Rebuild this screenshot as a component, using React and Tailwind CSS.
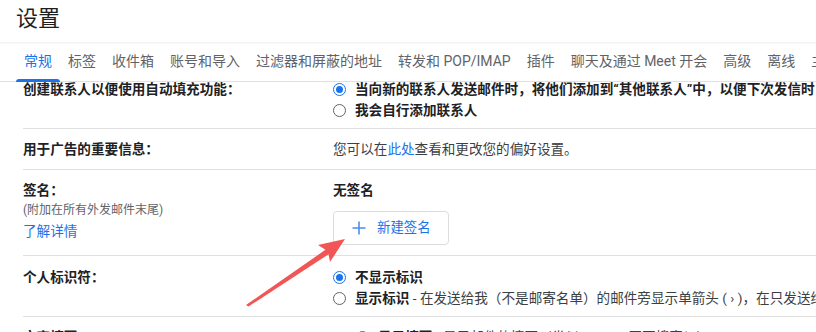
import React from "react"

const tabs = [
  "常规",
  "标签",
  "收件箱",
  "账号和导入",
  "过滤器和屏蔽的地址",
  "转发和 POP/IMAP",
  "插件",
  "聊天及通过 Meet 开会",
  "高级",
  "离线",
  "主题",
]

function Radio({ checked }) {
  return (
    <span
      className={
        checked
          ? "flex h-[13px] w-[13px] shrink-0 items-center justify-center rounded-full border-[1.5px] border-[#1a73e8]"
          : "flex h-[13px] w-[13px] shrink-0 items-center justify-center rounded-full border-[1.5px] border-[#5f6368]"
      }
    >
      {checked && <span className="h-[7px] w-[7px] rounded-full bg-[#1a73e8]" />}
    </span>
  )
}

function RadioLine({ checked, children }) {
  return (
    <div className="flex items-center gap-[9px] leading-[21px]">
      <Radio checked={checked} />
      <span>{children}</span>
    </div>
  )
}

export default function App() {
  return (
    <div
      className="relative h-[332px] w-[816px] overflow-hidden bg-white text-[#202124]"
      style={{ fontFamily: 'Roboto, "Noto Sans CJK SC", sans-serif' }}
    >
      {/* header */}
      <div className="relative z-10 h-[42px] pl-[16px] pt-[5px] text-[22px] leading-[28px] text-[#1f1f1f] shadow-[0_1px_2px_rgba(0,0,0,0.08)]">
        设置
      </div>

      {/* tabs */}
      <div className="flex h-[40px] whitespace-nowrap border-b border-[#e0e0e0] pl-[16px] text-[14px]">
        {tabs.map((t, i) => (
          <div
            key={t}
            className={
              i === 0
                ? "relative flex h-full shrink-0 items-center px-2 text-[#1a73e8]"
                : "relative flex h-full shrink-0 items-center px-2 text-[#5f6368]"
            }
          >
            {t}
            {i === 0 && (
              <span className="absolute bottom-[-1px] left-0 right-0 h-[3px] rounded-t-[3px] bg-[#1a73e8]" />
            )}
          </div>
        ))}
      </div>

      {/* settings rows */}
      <div className="overflow-hidden whitespace-nowrap pl-[23px] text-[13.6px]">
        <div className="-mt-[3px] flex border-b border-[#e0e0e0] pb-[7px]">
          <div className="w-[310px] shrink-0 font-bold leading-[20px]">创建联系人以便使用自动填充功能：</div>
          <div className="font-bold">
            <RadioLine checked>当向新的联系人发送邮件时，将他们添加到“其他联系人”中，以便下次发信时自动填充</RadioLine>
            <RadioLine>我会自行添加联系人</RadioLine>
          </div>
        </div>

        <div className="flex border-b border-[#e0e0e0] py-[10px] leading-[20px]">
          <div className="w-[310px] shrink-0 font-bold">用于广告的重要信息：</div>
          <div className="text-[#3c4043]">
            您可以在<span className="text-[#1a73e8]">此处</span>查看和更改您的偏好设置。
          </div>
        </div>

        <div className="flex border-b border-[#e0e0e0] pb-[10px] pt-[10px]">
          <div className="w-[310px] shrink-0 leading-[20px]">
            <div className="font-bold">签名：</div>
            <div className="text-[12px] leading-[21px] text-[#5f6368]">(附加在所有外发邮件末尾)</div>
            <div className="text-[#1a73e8]">了解详情</div>
          </div>
          <div>
            <div className="font-bold leading-[20px]">无签名</div>
            <button className="mt-[11px] flex h-[34px] items-center gap-[11px] rounded-[4px] border border-[#dadce0] bg-white pl-[18px] pr-[17px] text-[13.4px] text-[#1a73e8]">
              <svg width="14" height="14" viewBox="0 0 14 14" fill="none" stroke="#4c8df0" strokeWidth="1.6">
                <path d="M7 0.5v13M0.5 7h13" />
              </svg>
              新建签名
            </button>
          </div>
        </div>

        <div className="flex border-b border-[#e0e0e0] pb-[7px] pt-[11px]">
          <div className="w-[310px] shrink-0 font-bold leading-[20px]">个人标识符：</div>
          <div>
            <RadioLine checked>
              <b>不显示标识</b>
            </RadioLine>
            <RadioLine>
              <b>显示标识</b>
              <span className="text-[#3c4043]"> - 在发送给我（不是邮寄名单）的邮件旁显示单箭头 ( › )，在只发送给我的邮件旁显示双箭头 ( » )。</span>
            </RadioLine>
          </div>
        </div>

        <div className="flex pt-[10px] leading-[20px]">
          <div className="w-[310px] shrink-0 font-bold">文字摘要：</div>
          <div className="pl-[23px]">
            <RadioLine checked>
              <b>显示摘要</b>
              <span className="text-[#3c4043]"> - 显示邮件的摘要（类似 Google 网页搜索！）。</span>
            </RadioLine>
          </div>
        </div>
      </div>

      {/* red annotation arrow */}
      <svg className="pointer-events-none absolute left-0 top-0" width="816" height="332">
        <polygon
          points="246,305 248.5,306.5 328.6,254.3 330,262 345,239 318,245 325.4,249.8"
          fill="#f25555"
        />
      </svg>
    </div>
  )
}
